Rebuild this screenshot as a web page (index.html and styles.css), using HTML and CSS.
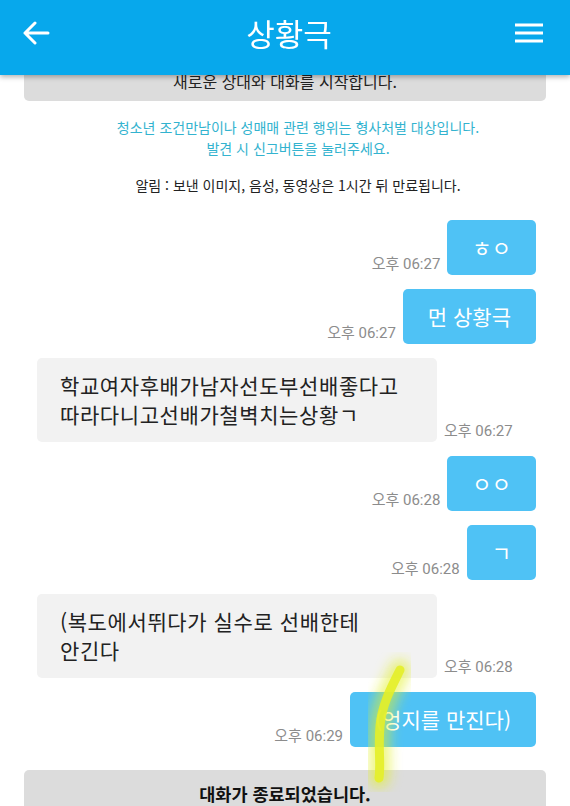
FILE: index.html
```html
<!DOCTYPE html>
<html lang="ko">

<head>
  <meta charset="UTF-8">
  <meta name="viewport" content="width=device-width, initial-scale=1.0">
  <title>상황극</title>

  <link rel="stylesheet" href="styles.css">
</head>

<body>
  <header class="top-bar">
    <button class="icon-btn" aria-label="back">
      <svg width="28" height="24" viewBox="0 0 28 24">
        <path d="M26 12H3M13 2L3 12l10 10" fill="none" stroke="#fff" stroke-width="3" stroke-linecap="round" stroke-linejoin="round" />
      </svg>
    </button>
    <h1 class="title">상황극</h1>
    <button class="icon-btn" aria-label="menu">
      <svg width="30" height="22" viewBox="0 0 30 22">
        <path d="M1 3h28M1 11h28M1 19h28" fill="none" stroke="#fff" stroke-width="3" />
      </svg>
    </button>
  </header>

  <main class="chat">
    <div class="sys-bar">새로운 상대와 대화를 시작합니다.</div>

    <p class="warn">청소년 조건만남이나 성매매 관련 행위는 형사처벌 대상입니다.<br>발견 시 신고버튼을 눌러주세요.</p>
    <p class="notice">알림 : 보낸 이미지, 음성, 동영상은 1시간 뒤 만료됩니다.</p>

    <div class="msg-list">
      <div class="row me">
        <span class="time">오후 06:27</span>
        <div class="bubble">ㅎㅇ</div>
      </div>
      <div class="row me">
        <span class="time">오후 06:27</span>
        <div class="bubble">먼 상황극</div>
      </div>
      <div class="row you">
        <div class="bubble">학교여자후배가남자선도부선배좋다고<br>따라다니고선배가철벽치는상황ㄱ</div>
        <span class="time">오후 06:27</span>
      </div>
      <div class="row me">
        <span class="time">오후 06:28</span>
        <div class="bubble">ㅇㅇ</div>
      </div>
      <div class="row me">
        <span class="time">오후 06:28</span>
        <div class="bubble">ㄱ</div>
      </div>
      <div class="row you">
        <div class="bubble">(복도에서뛰다가 실수로 선배한테<br>안긴다</div>
        <span class="time">오후 06:28</span>
      </div>
      <div class="row me">
        <span class="time">오후 06:29</span>
        <div class="bubble">(엉지를 만진다)</div>
      </div>
    </div>

    <div class="sys-bar end">대화가 종료되었습니다.</div>
  </main>

  <!-- highlighter mark on the screenshot -->
  <svg class="scribble" width="70" height="140" viewBox="0 0 70 140">
    <defs>
      <filter id="glow" x="-50%" y="-50%" width="200%" height="200%">
        <feGaussianBlur stdDeviation="6" />
      </filter>
    </defs>
    <path d="M44 18C36 34 26 52 24 74C22 96 25 112 23 126" fill="none" stroke="rgba(225,240,40,0.55)" stroke-width="22" stroke-linecap="round" filter="url(#glow)" />
    <path d="M44 18C36 34 26 52 24 74C22 96 25 112 23 126" fill="none" stroke="rgba(228,238,40,0.9)" stroke-width="9" stroke-linecap="round" />
  </svg>
</body>

</html>
```

FILE: styles.css
```css
* {
  margin: 0;
  padding: 0;
  box-sizing: border-box;
}

body {
  width: 570px;
  height: 806px;
  overflow: hidden;
  position: relative;
  background: #fff;
  font-family: "Noto Sans CJK KR", "Noto Sans", sans-serif;
  color: #222;
}

.top-bar {
  position: fixed;
  top: 0;
  left: 0;
  width: 100%;
  height: 75px;
  z-index: 2;
  display: flex;
  align-items: center;
  justify-content: space-between;
  padding: 0 26px 10px 22px;
  background: #07a8ec;
  box-shadow: 0 2px 5px rgba(0, 0, 0, 0.3);
}

.icon-btn {
  background: transparent;
  border: none;
  display: flex;
  align-items: center;
}

.title {
  font-size: 31px;
  font-weight: 400;
  color: #fff;
  margin-left: 14px;
}

.chat {
  padding-top: 61px;
}

.sys-bar {
  margin: 0 24px;
  height: 40px;
  display: flex;
  justify-content: center;
  align-items: center;
  background: #dcdcdc;
  border-radius: 0 0 5px 5px;
  font-size: 16px;
  color: #222;
}

.sys-bar.end {
  margin-top: 23px;
  height: 50px;
  align-items: flex-start;
  padding-top: 11px;
  border-radius: 5px 5px 0 0;
  font-size: 17.5px;
  font-weight: 700;
  color: #111;
}

.warn {
  margin-top: 16px;
  text-align: center;
  font-size: 14px;
  line-height: 21px;
  color: #33b3cf;
  padding-left: 26px;
}

.notice {
  margin-top: 16px;
  text-align: center;
  font-size: 14px;
  line-height: 21px;
  color: #222;
  padding-left: 26px;
}

.msg-list {
  margin-top: 24px;
  padding: 0 34px 0 37px;
  display: flex;
  flex-direction: column;
  gap: 14px;
}

.row {
  display: flex;
  align-items: flex-end;
  gap: 7px;
}

.row.me {
  justify-content: flex-end;
}

.time {
  font-family: Roboto, "Noto Sans CJK KR", sans-serif;
  font-size: 15px;
  line-height: 18px;
  color: #8c8c8c;
  padding-bottom: 2px;
  white-space: nowrap;
}

.bubble {
  font-size: 21px;
  line-height: 29px;
  padding: 13px 25px;
  border-radius: 5px;
}

.me .bubble {
  background: #4fc2f5;
  color: #fff;
}

.you .bubble {
  width: 400px;
  padding: 13px 23px;
  background: #f2f2f2;
  color: #222;
  letter-spacing: 0.6px;
}

.scribble {
  position: absolute;
  left: 356px;
  top: 652px;
  z-index: 1;
  pointer-events: none;
}
```
